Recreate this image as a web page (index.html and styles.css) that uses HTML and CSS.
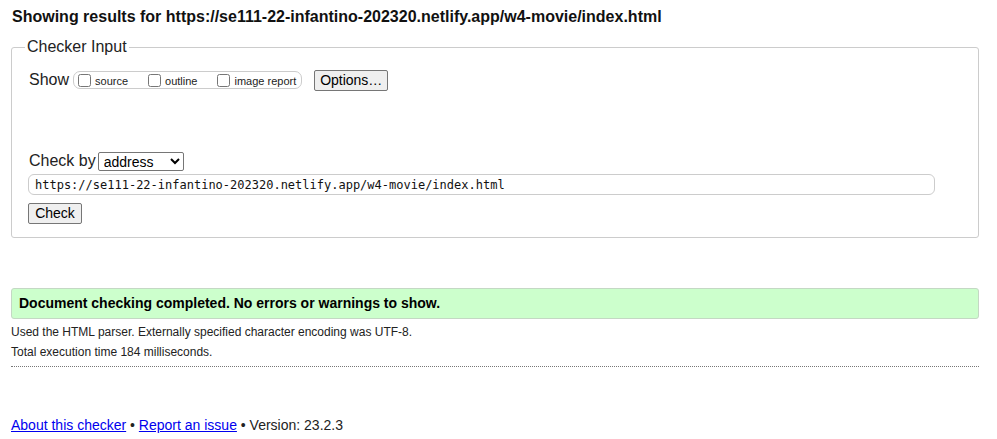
FILE: index.html
```html
<!DOCTYPE html>
<html lang="en">
<head>
<meta charset="utf-8">
<title>Showing results for https://se111-22-infantino-202320.netlify.app/w4-movie/index.html - Nu Html Checker</title>
<link rel="stylesheet" href="styles.css">
</head>
<body>
<h1 class="title">Showing results for https://se111-22-infantino-202320.netlify.app/w4-movie/index.html</h1>
<form class="checker-form">
  <fieldset class="input-box">
    <legend class="input-legend">Checker Input</legend>
    <div class="show-row">
      <span class="show-label">Show</span>
      <span class="show-options">
        <label class="opt"><input type="checkbox" class="cb">source</label>
        <label class="opt"><input type="checkbox" class="cb">outline</label>
        <label class="opt last"><input type="checkbox" class="cb">image report</label>
      </span>
      <button type="button" class="btn options-btn">Options…</button>
    </div>
    <div class="checkby-row">
      <label class="checkby-label">Check by</label>
      <select class="checkby-select">
        <option>address</option>
        <option>file upload</option>
        <option>text input</option>
      </select>
    </div>
    <div class="url-row">
      <input type="url" class="url-input" value="https://se111-22-infantino-202320.netlify.app/w4-movie/index.html">
    </div>
    <div class="submit-row">
      <button type="submit" class="btn check-btn">Check</button>
    </div>
  </fieldset>
</form>
<p class="success">Document checking completed. No errors or warnings to show.</p>
<p class="details">Used the HTML parser. Externally specified character encoding was UTF-8.</p>
<p class="details">Total execution time 184 milliseconds.</p>
<hr class="divider">
<p class="footer"><a href="#" class="link">About this checker</a> • <a href="#" class="link">Report an issue</a> • Version: 23.2.3</p>
</body>
</html>
```
FILE: styles.css
```css
html, body {
  background: #fff;
}
body {
  margin: 0;
  padding: 8px 18px 0 11px;
  font-family: "Liberation Sans", Arial, sans-serif;
  color: #222;
}
.title {
  margin: 0 0 11px 1px;
  font-size: 16px;
  line-height: 18px;
  font-weight: bold;
  color: #111;
}
.checker-form {
  margin: 0;
}
.input-box {
  margin: 0;
  padding: 13px 0 13px 16px;
  border: 1px solid #ccc;
  border-radius: 3px;
  min-width: 0;
}
.input-legend {
  margin-left: -3px;
  padding: 0 2px;
  font-size: 16px;
  line-height: 20px;
  color: #222;
}
.show-row {
  display: flex;
  align-items: center;
  height: 20px;
}
.show-label {
  font-size: 16px;
  line-height: 18px;
  margin-left: 1px;
  margin-right: 4px;
}
.show-options {
  display: flex;
  align-items: center;
  height: 16px;
  padding: 0 5px 0 0;
  border: 1px solid #ccc;
  border-radius: 7px;
  margin-right: 12px;
}
.opt {
  display: flex;
  align-items: center;
  font-size: 11px;
  line-height: 13px;
  margin-right: 16px;
  padding-top: 2px;
}
.opt.last {
  margin-right: 0;
}
.cb {
  width: 13px;
  height: 13px;
  margin: -2px 4px 0 4px;
}
.btn {
  font-family: "Liberation Sans", Arial, sans-serif;
  font-size: 14px;
  line-height: 17px;
  color: #000;
  background: #efefef;
  border: 1px solid #767676;
  border-radius: 2px;
  padding: 1px 6px;
  margin: 0;
}
.options-btn {
  width: 74px;
  height: 21px;
  padding: 0;
}
.checkby-row {
  display: flex;
  align-items: center;
  height: 20px;
  margin-top: 61px;
}
.checkby-label {
  font-size: 16px;
  line-height: 18px;
  margin-left: 1px;
  margin-right: 2px;
}
.checkby-select {
  font-family: "Liberation Sans", Arial, sans-serif;
  font-size: 14px;
  width: 86px;
  height: 19px;
  border: 1px solid #767676;
  border-radius: 2px;
  background: #fff;
  color: #000;
  padding: 0 0 0 1px;
  margin: 0;
}
.url-row {
  margin-top: 3px;
}
.url-input {
  box-sizing: border-box;
  width: 907px;
  height: 21px;
  border: 1px solid #ccc;
  border-radius: 6px;
  padding: 0 6px;
  margin: 0;
  font-family: "DejaVu Sans Mono", "Liberation Mono", monospace;
  font-size: 12px;
  color: #111;
}
.submit-row {
  margin-top: 8px;
}
.check-btn {
  width: 54px;
  height: 21px;
  padding: 0;
}
.success {
  margin: 50px 0 3px 0;
  padding: 6px 7px;
  background: #ccffcc;
  border: 1px solid #c4d8c4;
  border-radius: 3px;
  font-size: 14px;
  line-height: 17px;
  font-weight: bold;
  color: #000;
}
.details {
  margin: 0;
  font-size: 12px;
  line-height: 20px;
  color: #222;
}
.divider {
  margin: 4px 0 0 0;
  border: 0;
  border-top: 1px dotted #777;
  height: 0;
}
.footer {
  margin: 50px 0 0 0;
  font-size: 14px;
  line-height: 16px;
  color: #222;
}
.link {
  color: #0000ee;
  text-decoration: underline;
}
```
